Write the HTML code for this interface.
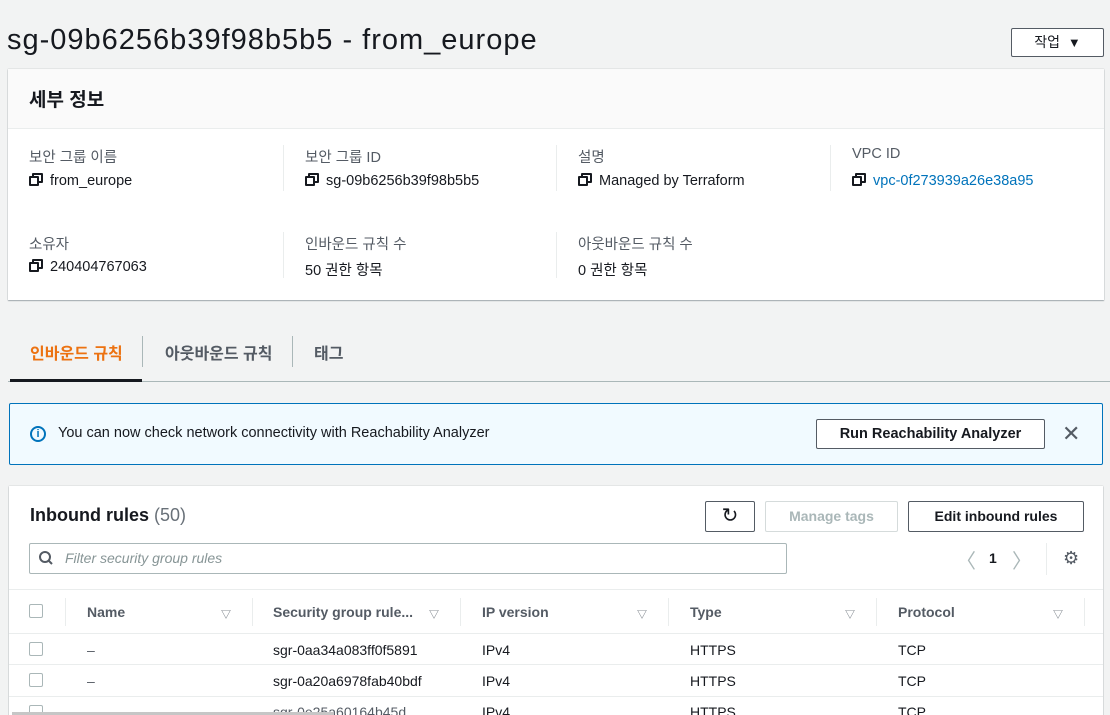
<!DOCTYPE html>
<html><head><meta charset="utf-8"><style>
*{box-sizing:border-box;margin:0;padding:0}
html,body{width:1110px;height:715px;overflow:hidden}
body{background:#f2f3f3;font-family:"Liberation Sans","Noto Sans CJK KR",sans-serif;color:#16191f;position:relative;font-size:14px}
.a{position:absolute;white-space:nowrap}
.lbl{color:#545b64;font-size:14.5px}
.val{font-size:14.5px}
.cp{display:inline-block;width:14px;height:13px;position:relative;vertical-align:-1px;margin-right:7px}
.cp:before{content:"";position:absolute;left:0;top:3px;width:10px;height:10px;border:2.5px solid #16191f;background:#fff;box-sizing:border-box;border-radius:1px;z-index:1}
.cp:after{content:"";position:absolute;left:3px;top:0;width:11px;height:10px;border:2.5px solid #16191f;box-sizing:border-box;border-radius:1px}
.vd{position:absolute;width:1px;background:#eaeded}
.btn{position:absolute;border:1px solid #545b64;background:#fff;border-radius:2px;font-weight:bold;font-size:14px;color:#545b64;text-align:center}
.cb{position:absolute;width:14px;height:14px;border:1px solid #aab7b8;border-radius:2px;background:#fff}
.tri{color:#687078;font-size:10px}
.th{font-weight:bold;color:#545b64;font-size:14px}
</style></head><body>
<div class="a" style="left:7px;top:24px;font-size:29px;letter-spacing:1px">sg-09b6256b39f98b5b5 - from_europe</div>
<div class="btn" style="left:1011px;top:28px;width:93px;height:29px;line-height:27px;color:#16191f;font-weight:normal">작업 &nbsp;<span style="font-size:13px">▼</span></div>

<div class="a" style="left:8px;top:69px;width:1096px;height:231px;background:#fff;box-shadow:0 1px 1px rgba(0,28,36,.3),0 0 1px rgba(0,28,36,.3)">
 <div style="height:60px;background:#fafafa;border-bottom:1px solid #eaeded;font-size:19px;font-weight:bold;padding:16px 0 0 21px">세부 정보</div>
</div>
<div class="a lbl" style="left:29px;top:146px">보안 그룹 이름</div>
<div class="a val" style="left:29px;top:173px"><span class="cp"></span>from_europe</div>
<div class="vd" style="left:283px;top:145px;height:46px"></div>
<div class="a lbl" style="left:305px;top:146px">보안 그룹 ID</div>
<div class="a val" style="left:305px;top:173px"><span class="cp"></span>sg-09b6256b39f98b5b5</div>
<div class="vd" style="left:556px;top:145px;height:46px"></div>
<div class="a lbl" style="left:578px;top:146px">설명</div>
<div class="a val" style="left:578px;top:173px"><span class="cp"></span>Managed by Terraform</div>
<div class="vd" style="left:830px;top:145px;height:46px"></div>
<div class="a lbl" style="left:852px;top:146px">VPC ID</div>
<div class="a val" style="left:852px;top:173px;color:#0073bb"><span class="cp"></span>vpc-0f273939a26e38a95</div>
<div class="a lbl" style="left:29px;top:233px">소유자</div>
<div class="a val" style="left:29px;top:259px"><span class="cp"></span>240404767063</div>
<div class="vd" style="left:283px;top:232px;height:46px"></div>
<div class="a lbl" style="left:305px;top:233px">인바운드 규칙 수</div>
<div class="a val" style="left:305px;top:259px">50 권한 항목</div>
<div class="vd" style="left:556px;top:232px;height:46px"></div>
<div class="a lbl" style="left:578px;top:233px">아웃바운드 규칙 수</div>
<div class="a val" style="left:578px;top:259px">0 권한 항목</div>

<div class="a" style="left:30px;top:340px;font-size:16px;font-weight:bold;color:#ec7211">인바운드 규칙</div>
<div class="a" style="left:142px;top:336px;width:1px;height:31px;background:#aab7b8"></div>
<div class="a" style="left:165px;top:340px;font-size:16px;font-weight:bold;color:#545b64">아웃바운드 규칙</div>
<div class="a" style="left:292px;top:336px;width:1px;height:31px;background:#aab7b8"></div>
<div class="a" style="left:314px;top:340px;font-size:16px;font-weight:bold;color:#545b64">태그</div>
<div class="a" style="left:8px;top:381px;width:1102px;height:1px;background:#aab7b8"></div>
<div class="a" style="left:10px;top:379px;width:132px;height:3px;background:#16191f"></div>

<div class="a" style="left:9px;top:403px;width:1094px;height:62px;background:#f1faff;border:1px solid #0073bb;border-radius:2px"></div>
<div class="a" style="left:30px;top:426px;width:16px;height:16px;border:2px solid #0073bb;border-radius:50%;color:#0073bb;font-size:11px;font-weight:bold;text-align:center;line-height:12px">i</div>
<div class="a" style="left:58px;top:425px;font-size:14.5px;color:#16191f">You can now check network connectivity with Reachability Analyzer</div>
<div class="btn" style="left:816px;top:419px;width:229px;height:30px;line-height:28px;color:#16191f;font-size:14.5px">Run Reachability Analyzer</div>
<div class="a" style="left:1062px;top:421px;font-size:22px;color:#545b64">✕</div>

<div class="a" style="left:9px;top:486px;width:1094px;height:240px;background:#fff;box-shadow:0 1px 1px rgba(0,28,36,.3),0 0 1px rgba(0,28,36,.3)"></div>
<div class="a" style="left:30px;top:505px;font-size:18px;font-weight:bold">Inbound rules <span style="font-weight:normal;color:#687078">(50)</span></div>
<div class="btn" style="left:705px;top:501px;width:50px;height:31px;line-height:28px;color:#16191f;font-size:20px;font-weight:normal">↻</div>
<div class="btn" style="left:765px;top:501px;width:133px;height:31px;line-height:29px;border-color:#d5dbdb;color:#aab7b8">Manage tags</div>
<div class="btn" style="left:908px;top:501px;width:176px;height:31px;line-height:29px;color:#16191f">Edit inbound rules</div>
<div class="a" style="left:29px;top:543px;width:758px;height:31px;border:1px solid #aab7b8;border-radius:2px;background:#fff"></div>
<svg class="a" style="left:37px;top:550px" width="18" height="18" viewBox="0 0 18 18"><circle cx="8" cy="7" r="5" fill="none" stroke="#545b64" stroke-width="2"/><path d="M11.5 10.5 L15 14" stroke="#545b64" stroke-width="2"/></svg>
<div class="a" style="left:65px;top:550px;font-size:14px;font-style:italic;color:#879596">Filter security group rules</div>
<div class="a" style="left:956px;top:545px;font-size:20px;color:#aab7b8">〈</div>
<div class="a" style="left:989px;top:550px;font-size:14px;font-weight:bold">1</div>
<div class="a" style="left:1012px;top:545px;font-size:20px;color:#aab7b8">〉</div>
<div class="a" style="left:1046px;top:543px;width:1px;height:32px;background:#eaeded"></div>
<div class="a" style="left:1063px;top:548px;font-size:18px;color:#545b64">⚙</div>
<div class="a" style="left:9px;top:589px;width:1094px;height:1px;background:#eaeded"></div>

<div class="cb" style="left:29px;top:604px"></div>
<div class="a" style="left:65px;top:598px;width:1px;height:28px;background:#eaeded"></div>
<div class="a th" style="left:87px;top:604px">Name</div>
<div class="a tri" style="left:221px;top:606px">▽</div>
<div class="a" style="left:252px;top:598px;width:1px;height:28px;background:#eaeded"></div>
<div class="a th" style="left:273px;top:604px">Security group rule...</div>
<div class="a tri" style="left:429px;top:606px">▽</div>
<div class="a" style="left:460px;top:598px;width:1px;height:28px;background:#eaeded"></div>
<div class="a th" style="left:482px;top:604px">IP version</div>
<div class="a tri" style="left:637px;top:606px">▽</div>
<div class="a" style="left:668px;top:598px;width:1px;height:28px;background:#eaeded"></div>
<div class="a th" style="left:690px;top:604px">Type</div>
<div class="a tri" style="left:845px;top:606px">▽</div>
<div class="a" style="left:876px;top:598px;width:1px;height:28px;background:#eaeded"></div>
<div class="a th" style="left:898px;top:604px">Protocol</div>
<div class="a tri" style="left:1053px;top:606px">▽</div>
<div class="a" style="left:1084px;top:598px;width:1px;height:28px;background:#eaeded"></div>
<div class="a" style="left:9px;top:633px;width:1094px;height:1px;background:#eaeded"></div>

<div class="cb" style="left:29px;top:642px"></div>
<div class="a" style="left:87px;top:642px;color:#545b64">–</div>
<div class="a" style="left:273px;top:642px">sgr-0aa34a083ff0f5891</div>
<div class="a" style="left:482px;top:642px">IPv4</div>
<div class="a" style="left:690px;top:642px">HTTPS</div>
<div class="a" style="left:898px;top:642px">TCP</div>
<div class="a" style="left:9px;top:664px;width:1094px;height:1px;background:#eaeded"></div>
<div class="cb" style="left:29px;top:673px"></div>
<div class="a" style="left:87px;top:673px;color:#545b64">–</div>
<div class="a" style="left:273px;top:673px">sgr-0a20a6978fab40bdf</div>
<div class="a" style="left:482px;top:673px">IPv4</div>
<div class="a" style="left:690px;top:673px">HTTPS</div>
<div class="a" style="left:898px;top:673px">TCP</div>
<div class="a" style="left:9px;top:696px;width:1094px;height:1px;background:#eaeded"></div>
<div class="cb" style="left:29px;top:705px"></div>
<div class="a" style="left:273px;top:704px;color:#545b64">sgr-0e25a60164b45d</div>
<div class="a" style="left:482px;top:704px">IPv4</div>
<div class="a" style="left:690px;top:704px">HTTPS</div>
<div class="a" style="left:898px;top:704px">TCP</div>
<div class="a" style="left:12px;top:712px;width:322px;height:3px;background:#c6c6c6;z-index:5"></div>
</body></html>
